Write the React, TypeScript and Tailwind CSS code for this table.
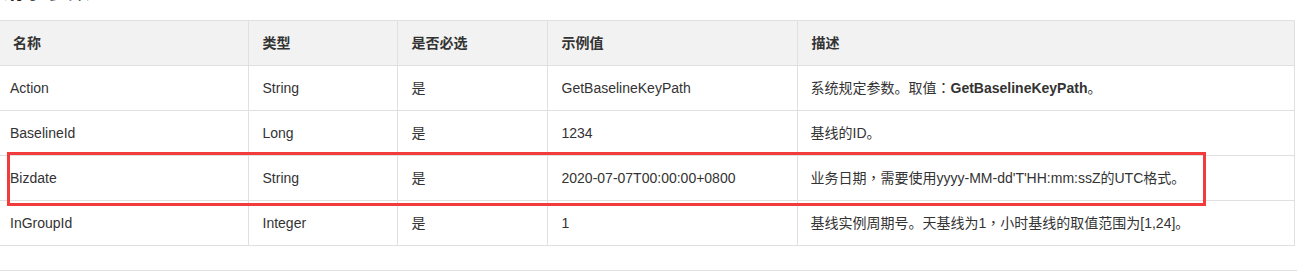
// centred full-width punctuation, as in traditional-style CJK fonts
const P = ({ c }: { c: string }) => (
  <span style={{ fontFamily: '"Noto Sans CJK TC", sans-serif' }}>{c}</span>
);

const rows = [
  { name: "Action", type: "String", required: "是", example: "GetBaselineKeyPath", desc: <>系统规定参数。取值<P c="：" /><b className="font-bold">GetBaselineKeyPath</b>。</> },
  { name: "BaselineId", type: "Long", required: "是", example: "1234", desc: <>基线的ID。</> },
  { name: "Bizdate", type: "String", required: "是", example: "2020-07-07T00:00:00+0800", desc: <>业务日期<P c="，" />需要使用yyyy-MM-dd'T'HH:mm:ssZ的UTC格式。</> },
  { name: "InGroupId", type: "Integer", required: "是", example: "1", desc: <>基线实例周期号。天基线为1<P c="，" />小时基线的取值范围为[1,24]。</> },
];

const headers = ["名称", "类型", "是否必选", "示例值", "描述"];
const widths = [248, 149, 150, 250, 497];

export default function App() {
  return (
    <div
      className="relative w-[1297px] h-[272px] overflow-hidden bg-white text-[14px] text-[#333]"
      style={{ fontFamily: '"Liberation Sans", "Noto Sans CJK SC", sans-serif' }}
    >
      {/* section heading, scrolled mostly out of view */}
      <div className="h-5 overflow-hidden">
        <h3 className="-mt-[20px] ml-[2px] text-[22px] leading-[22px] font-bold text-[#222]">请求参数</h3>
      </div>

      <table className="table-fixed border-collapse w-[1294px]">
        <colgroup>
          {widths.map((w, i) => (
            <col key={i} style={{ width: w }} />
          ))}
        </colgroup>
        <thead>
          <tr className="bg-[#f2f2f2]">
            {headers.map((h, i) => (
              <th
                key={h}
                className={`h-[45px] border-y border-[#e0e0e0] text-left font-bold ${i === 0 ? "pl-[13px]" : "pl-[14px] border-l"} ${i === 4 ? "border-r" : ""}`}
              >
                {h}
              </th>
            ))}
          </tr>
        </thead>
        <tbody>
          {rows.map((r) => (
            <tr key={r.name}>
              <td className="h-[45px] border-b border-[#e0e0e0] pl-[10px]">{r.name}</td>
              <td className="border-b border-l border-[#e0e0e0] pl-[14px]">{r.type}</td>
              <td className="border-b border-l border-[#e0e0e0] pl-[14px]">{r.required}</td>
              <td className="border-b border-l border-[#e0e0e0] pl-[14px]">{r.example}</td>
              <td className="border-b border-l border-r border-[#e0e0e0] pl-[13px]">{r.desc}</td>
            </tr>
          ))}
        </tbody>
      </table>

      <div className="mt-[24px] border-t border-[#e0e0e0]" />

      {/* highlight around the Bizdate row */}
      <div className="absolute left-[7px] top-[152px] w-[1199px] h-[54px] border-[3px] border-[#f23b3b] pointer-events-none" />
    </div>
  );
}
